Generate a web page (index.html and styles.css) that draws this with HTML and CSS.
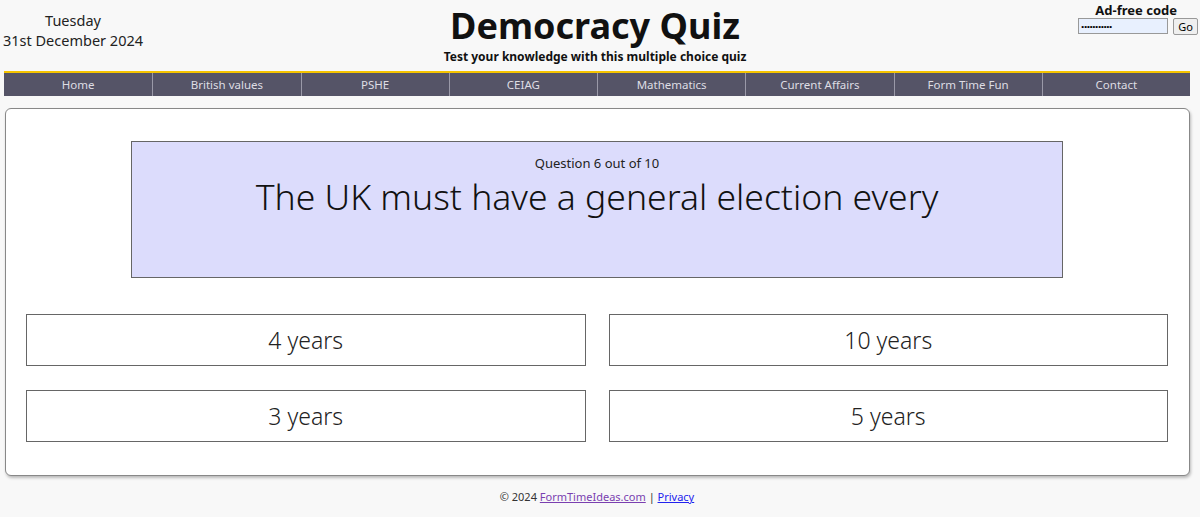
FILE: index.html
```html
<!DOCTYPE html>
<html lang="en">
<head>
<meta charset="utf-8">
<title>Democracy Quiz</title>
<link rel="stylesheet" href="styles.css">
</head>
<body>
<header class="top">
  <div class="date">
    <div>Tuesday</div>
    <div>31st December 2024</div>
  </div>
  <div class="titles">
    <h1 class="title">Democracy Quiz</h1>
    <p class="subtitle">Test your knowledge with this multiple choice quiz</p>
  </div>
  <div class="adfree">
    <div class="adfree-label">Ad-free code</div>
    <form class="adfree-form">
      <input class="adfree-input" type="password" value="abcdefghijk">
      <button class="adfree-go" type="button">Go</button>
    </form>
  </div>
</header>
<nav class="nav">
  <a class="nav-item" href="#">Home</a>
  <a class="nav-item" href="#">British values</a>
  <a class="nav-item" href="#">PSHE</a>
  <a class="nav-item" href="#">CEIAG</a>
  <a class="nav-item" href="#">Mathematics</a>
  <a class="nav-item" href="#">Current Affairs</a>
  <a class="nav-item" href="#">Form Time Fun</a>
  <a class="nav-item" href="#">Contact</a>
</nav>
<main class="card">
  <section class="question">
    <div class="q-count">Question 6 out of 10</div>
    <div class="q-text">The UK must have a general election every</div>
  </section>
  <section class="answers">
    <div class="answer">4 years</div>
    <div class="answer">10 years</div>
    <div class="answer">3 years</div>
    <div class="answer">5 years</div>
  </section>
</main>
<footer class="footer">
  © 2024 <a class="visited" href="#">FormTimeIdeas.com</a> | <a class="link" href="#">Privacy</a>
</footer>
</body>
</html>
```
FILE: styles.css
```css
html, body {
  margin: 0;
  padding: 0;
}
*, *::before, *::after {
  box-sizing: border-box;
}
body {
  background: #f8f8f8;
  font-family: "Noto Sans", "DejaVu Sans", sans-serif;
  color: #111;
  padding: 0 10px 0 4px;
}
.top {
  display: grid;
  grid-template-columns: 1fr auto 1fr;
  align-items: start;
  height: 71px;
}
.date {
  justify-self: start;
  width: 140px;
  margin-left: -1px;
  text-align: center;
  font-size: 14.5px;
  line-height: 20px;
  padding-top: 10px;
  color: #222;
  white-space: nowrap;
}
.titles {
  text-align: center;
  padding-right: 4px;
}
.title {
  margin: 0;
  font-size: 36px;
  line-height: 44px;
  font-weight: 700;
  padding-top: 4px;
}
.subtitle {
  margin: 0;
  font-size: 12px;
  font-weight: 700;
  line-height: 14px;
  padding-top: 2px;
}
.adfree {
  justify-self: end;
  display: flex;
  flex-direction: column;
  align-items: flex-end;
  padding-top: 2px;
  margin-right: -8px;
}
.adfree-label {
  font-size: 13px;
  font-weight: 700;
  line-height: 16px;
  margin-right: 21px;
}
.adfree-form {
  display: flex;
  gap: 5px;
  margin: 0;
}
.adfree-input {
  width: 90px;
  height: 16px;
  font-size: 8px;
  padding: 1px 2px;
  border: 1px solid #999;
  background: #e8f0fe;
}
.adfree-go {
  font-size: 11px;
  padding: 0 4px;
  height: 17px;
  border: 1px solid #999;
  border-radius: 2px;
  background: #efefef;
  font-family: "Noto Sans", sans-serif;
}
.nav {
  display: grid;
  grid-template-columns: repeat(8, 1fr);
  border-top: 2px solid #f5c400;
  background: #555467;
  height: 25px;
}
.nav-item {
  color: #dedde4;
  text-decoration: none;
  font-size: 11.5px;
  text-align: center;
  line-height: 23px;
  border-left: 1px solid #9a99a8;
}
.nav-item:first-child {
  border-left: none;
}
.card {
  margin: 12px 0 0 1px;
  background: #fff;
  border: 1px solid #888;
  border-radius: 6px;
  box-shadow: 1px 2px 3px rgba(0, 0, 0, 0.25);
  padding: 32px 21px 33px 20px;
}
.question {
  width: 932px;
  margin: 0 auto;
  height: 137px;
  background: #dcdcfc;
  border: 1px solid #666;
  text-align: center;
}
.q-count {
  font-size: 13px;
  line-height: 16px;
  padding-top: 13px;
  color: #222;
}
.q-text {
  font-size: 35.5px;
  line-height: 44px;
  padding-top: 3px;
  font-weight: 300;
  color: #111;
}
.answers {
  display: grid;
  grid-template-columns: 1fr 1fr;
  column-gap: 23px;
  row-gap: 24px;
  margin-top: 36px;
}
.answer {
  height: 52px;
  border: 1px solid #666;
  background: #fff;
  text-align: center;
  font-size: 23px;
  line-height: 50px;
  font-weight: 300;
  color: #222;
}
.footer {
  text-align: center;
  font-size: 11px;
  color: #333;
  padding-top: 13px;
}
.visited {
  color: #7a3fb0;
}
.link {
  color: #2222ee;
}
```
